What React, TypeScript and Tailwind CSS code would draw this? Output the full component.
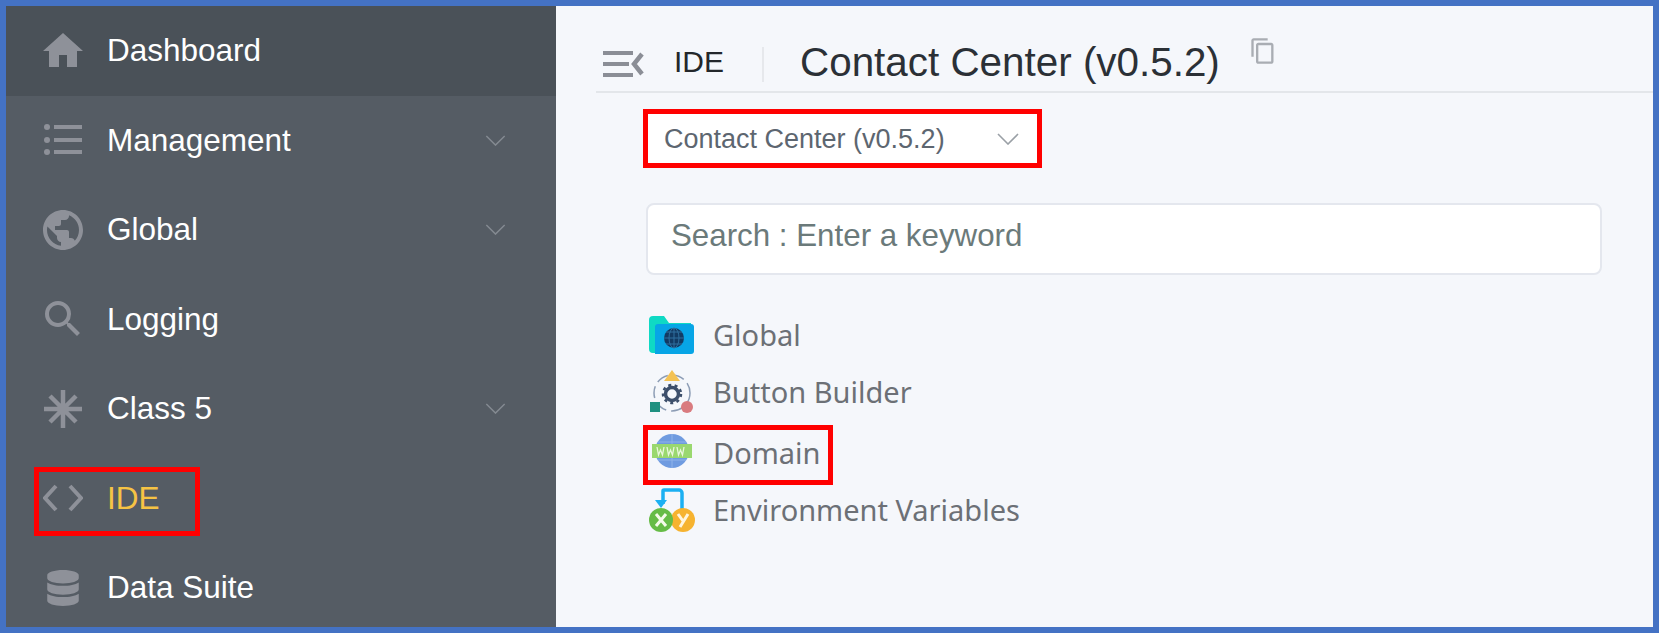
import React from 'react';
import { MdHome, MdPublic, MdSearch, MdContentCopy } from 'react-icons/md';
import { FaDatabase } from 'react-icons/fa';

//////////////////////////////////////////////////////
// SIDEBAR ICONS
//////////////////////////////////////////////////////

const ListIcon = () => (
  <svg width="40" height="34" viewBox="0 0 40 34" fill="currentColor">
    <circle cx="4" cy="4" r="3" />
    <circle cx="4" cy="17" r="3" />
    <circle cx="4" cy="29" r="3" />
    <rect x="11" y="2" width="28" height="4" />
    <rect x="11" y="15" width="28" height="4" />
    <rect x="11" y="27" width="28" height="4" />
  </svg>
);

const StarIcon = () => (
  <svg width="38" height="38" viewBox="0 0 38 38" stroke="currentColor" strokeWidth="4.5">
    <path d="M19 0V38M0 19H38M6 6L32 32M32 6L6 32" />
  </svg>
);

const CodeIcon = () => (
  <svg width="40" height="28" viewBox="0 0 40 28" fill="none" stroke="currentColor" strokeWidth="4">
    <path d="M13 2L2 14L13 26M27 2L38 14L27 26" />
  </svg>
);

const Chevron = ({ className }: { className: string }) => (
  <svg className={className} viewBox="0 0 22 12" fill="none" stroke="currentColor" strokeWidth="1.6">
    <path d="M1 1L11 11L21 1" />
  </svg>
);

const CollapseIcon = () => (
  <svg width="41" height="28" viewBox="0 0 41 28" fill="none" stroke="#8b8e96" strokeWidth="4">
    <path d="M0 3H30M0 14H26M0 25H30" />
    <path d="M39 4L31 14L39 24" strokeWidth="4.5" />
  </svg>
);

//////////////////////////////////////////////////////
// FILE TREE ICONS
//////////////////////////////////////////////////////

const FolderGlobeIcon = () => (
  <svg width="46" height="38" viewBox="0 0 46 38">
    <path d="M0 4a4 4 0 0 1 4-4h11l5 7h22v30H4a4 4 0 0 1-4-4z" fill="#0fd9c4" />
    <path d="M6 11a3 3 0 0 1 3-3h33a3 3 0 0 1 3 3v24a3 3 0 0 1-3 3H6z" fill="#07a5e6" />
    <circle cx="25" cy="22" r="10" fill="#123a63" />
    <path d="M15 22H35M25 12V32M17 16H33M17 28H33" stroke="#2e6f9f" strokeWidth="1" />
    <ellipse cx="25" cy="22" rx="5" ry="10" fill="none" stroke="#2e6f9f" strokeWidth="1" />
  </svg>
);

const BuilderIcon = () => (
  <svg width="44" height="44" viewBox="0 0 44 44">
    <circle cx="22" cy="23" r="18" fill="none" stroke="#8d9db5" strokeWidth="1.5" strokeDasharray="12 5" />
    <path d="M22 0L30 11H14z" fill="#f4c253" />
    <circle cx="22" cy="24" r="6.5" fill="#f5f7fb" stroke="#3d4f6b" strokeWidth="3.5" />
    <circle cx="22" cy="24" r="9" fill="none" stroke="#3d4f6b" strokeWidth="2.5" strokeDasharray="3 3.4" />
    <rect x="0" y="32" width="10" height="10" fill="#1f9080" />
    <circle cx="37" cy="37" r="6" fill="#d97b7f" />
  </svg>
);

const WwwIcon = () => (
  <svg width="40" height="34" viewBox="0 0 40 34">
    <circle cx="20" cy="17" r="17" fill="#6f9be0" />
    <path d="M3 17H37M20 0V34M6 8H34M6 26H34" stroke="#8fb3ea" strokeWidth="1" />
    <rect x="0" y="10" width="40" height="14" fill="#9ad86f" />
    <path d="M5 13l1.5 8 2-5 2 5 1.5-8M15 13l1.5 8 2-5 2 5 1.5-8M25 13l1.5 8 2-5 2 5 1.5-8" fill="none" stroke="#e9f7dc" strokeWidth="1.3" />
  </svg>
);

const VariablesIcon = () => (
  <svg width="46" height="44" viewBox="0 0 46 44">
    <path d="M14 16V3a1 1 0 0 1 1-1h15a3 3 0 0 1 3 3v18" fill="none" stroke="#1cb0f2" strokeWidth="3.5" />
    <path d="M6 12H18L12 20z" fill="#1cb0f2" />
    <circle cx="34" cy="32" r="12" fill="#f6b330" />
    <circle cx="12" cy="32" r="12" fill="#66bc46" />
    <path d="M7 26L17 38M17 26L7 38" stroke="#f4fbe9" strokeWidth="3" />
    <path d="M29 26L34 33M39 26L31 39" stroke="#fff5dd" strokeWidth="3" fill="none" />
  </svg>
);

//////////////////////////////////////////////////////
// DATA
//////////////////////////////////////////////////////

const navItems = [
  { label: 'Dashboard', icon: <MdHome size={48} />, active: true },
  { label: 'Management', icon: <ListIcon />, expandable: true },
  { label: 'Global', icon: <MdPublic size={48} />, expandable: true },
  { label: 'Logging', icon: <MdSearch size={48} /> },
  { label: 'Class 5', icon: <StarIcon />, expandable: true },
  { label: 'IDE', icon: <CodeIcon />, current: true },
  { label: 'Data Suite', icon: <FaDatabase size={36} /> },
];

const treeItems = [
  { label: 'Global', icon: <FolderGlobeIcon />, height: 'h-[56px]', iconOffset: '' },
  { label: 'Button Builder', icon: <BuilderIcon />, height: 'h-[58px]', iconOffset: '' },
  { label: 'Domain', icon: <WwwIcon />, height: 'h-[64px]', iconOffset: 'mt-[-5px]' },
  { label: 'Environment Variables', icon: <VariablesIcon />, height: 'h-[50px]', iconOffset: '' },
];

//////////////////////////////////////////////////////
// MAIN COMPONENT
//////////////////////////////////////////////////////

export default function App() {
  return (
    <div className="flex h-[633px] w-[1659px] overflow-hidden bg-[#4472c4] p-[6px] font-['Liberation_Sans',sans-serif]">
      {/* SIDEBAR */}
      <aside className="relative w-[550px] shrink-0 overflow-hidden bg-[#555c64]">
        {navItems.map((item) => (
          <div
            key={item.label}
            className={`flex h-[89.5px] items-center pl-[33px] pr-[50px] ${item.active ? 'bg-[#4a5158]' : ''}`}>
            <span className="flex w-[48px] items-center justify-center text-[#8e9199]">{item.icon}</span>
            <span className={`ml-[20px] text-[31.5px] leading-[44px] pb-[1px] ${item.current ? 'text-[#f6c344]' : 'text-white'}`}>
              {item.label}
            </span>
            {item.expandable && <Chevron className="ml-auto h-[11px] w-[21px] text-[#848a91]" />}
          </div>
        ))}

        {/* annotation around IDE */}
        <div className="absolute left-[28px] top-[461px] h-[69px] w-[166px] border-[5px] border-[#ff0000]" />
      </aside>

      {/* CONTENT */}
      <main className="relative min-w-0 flex-1 bg-[#f5f7fb]">
        <header className="ml-[40px] flex h-[87px] items-center border-b-2 border-[#e3e6ea] pt-[25px]">
          <span className="ml-[7px] mt-[6px] flex"><CollapseIcon /></span>
          <span className="ml-[30px] text-[30px] text-[#23272b]">IDE</span>
          <span className="ml-[38px] mt-[7px] h-[35px] w-[2px] bg-[#e6e8ec]" />
          <h1 className="ml-[36px] mt-[2px] text-[40.4px] text-[#2b3036]">Contact Center (v0.5.2)</h1>
          <MdContentCopy size={28} className="ml-[29px] mt-[-20px] text-[#a9adb3]" />
        </header>

        <div className="ml-[87px] mt-[16px] flex h-[59px] w-[399px] items-center border-[5px] border-[#ff0000] bg-white pl-[16px] pr-[18px]">
          <span className="pt-[2px] text-[27px] text-[#5d6670]">Contact Center (v0.5.2)</span>
          <Chevron className="ml-auto h-[12px] w-[22px] text-[#9aa0a6]" />
        </div>

        <div className="ml-[90px] mt-[35px] flex h-[72px] w-[956px] items-center rounded-lg border-2 border-[#e4e7ee] bg-white pb-[6px] pl-[23px] text-[31.3px] text-[#6b7a7a]">
          Search : Enter a keyword
        </div>

        <ul className="ml-[92px] mt-[32px] font-['Noto_Sans',sans-serif]">
          {treeItems.map((item) => (
            <li key={item.label} className={`flex items-center ${item.height}`}>
              <span className={`flex w-[48px] items-center justify-center ${item.iconOffset}`}>{item.icon}</span>
              <span className="ml-[17px] text-[29px] text-[#6c7076]">{item.label}</span>
            </li>
          ))}
        </ul>

        {/* annotation around Domain */}
        <div className="absolute left-[87px] top-[419px] h-[60px] w-[190px] border-[5px] border-[#ff0000]" />
      </main>
    </div>
  );
}
